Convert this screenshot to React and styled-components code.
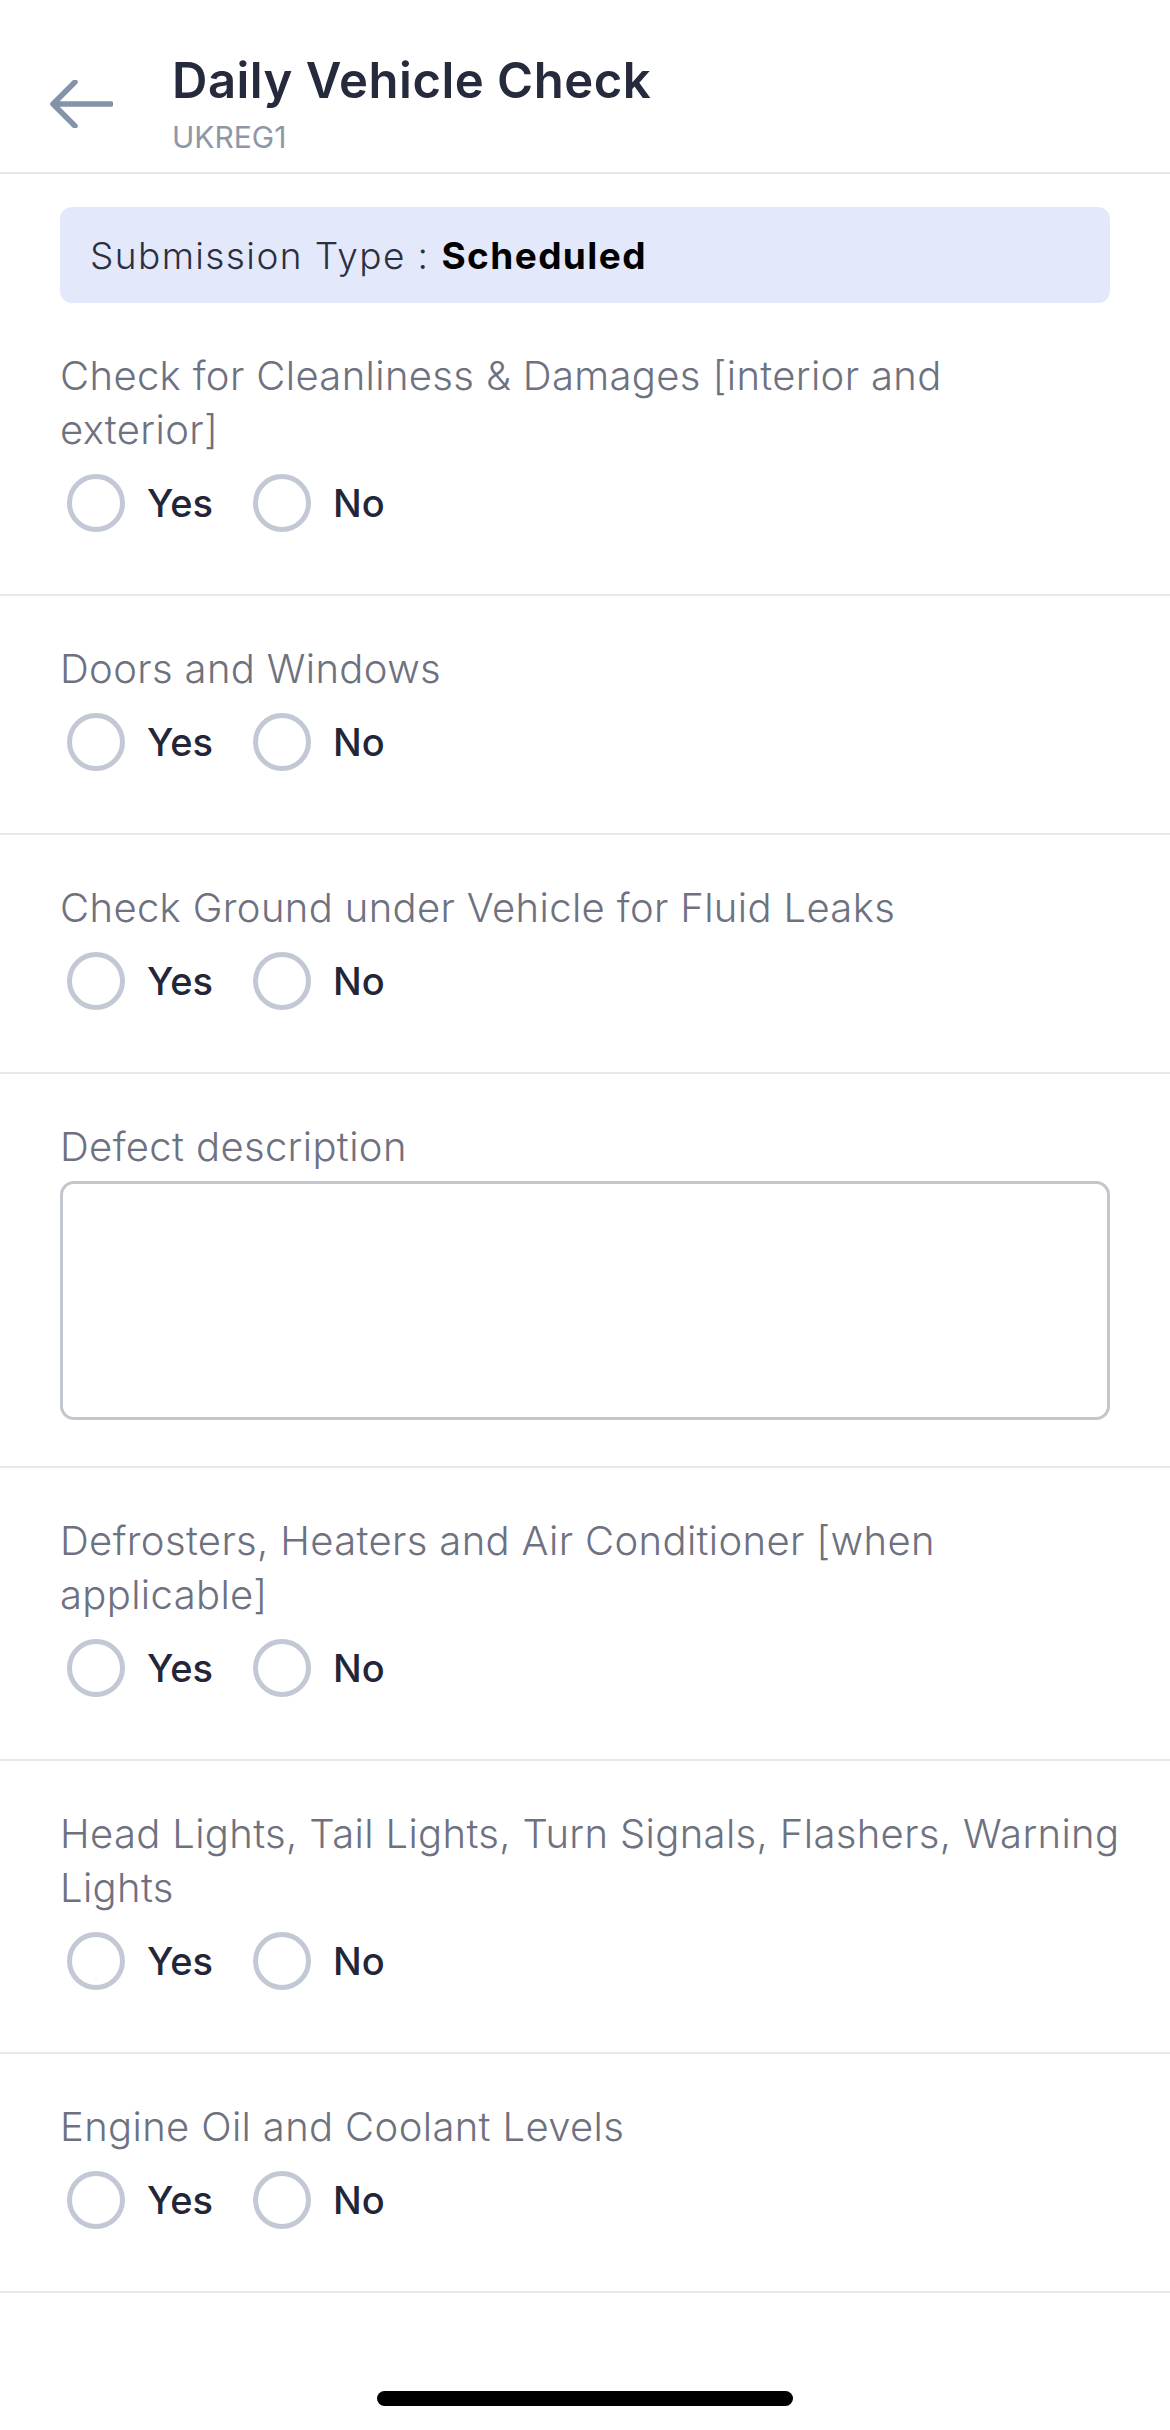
import styled, { createGlobalStyle } from "styled-components";

const GlobalStyle = createGlobalStyle`
  * {
    box-sizing: border-box;
  }
  body {
    margin: 0;
    background: #fff;
    font-family: "Inter", "Noto Sans", sans-serif;
  }
`;

// line breaks kept where the app wraps them on a 390pt screen
const questions = [
  { id: "clean", label: "Check for Cleanliness & Damages [interior and\nexterior]" },
  { id: "doors", label: "Doors and Windows" },
  { id: "leaks", label: "Check Ground under Vehicle for Fluid Leaks" },
  { id: "defect", label: "Defect description", type: "text" },
  { id: "heat", label: "Defrosters, Heaters and Air Conditioner [when\napplicable]" },
  { id: "lights", label: "Head Lights, Tail Lights, Turn Signals, Flashers, Warning\nLights" },
  { id: "oil", label: "Engine Oil and Coolant Levels" },
];

const BackArrow = () => (
  <svg width="64" height="48" viewBox="0 0 64 48" fill="none">
    <path
      d="M62 24H4M26 2L4 24l22 22"
      stroke="#8593a8"
      strokeWidth="5.5"
      strokeLinecap="round"
      strokeLinejoin="round"
    />
  </svg>
);

const Question = ({ q }) => (
  <SSection>
    <SLabel>{q.label}</SLabel>
    {q.type === "text" ? (
      <STextArea />
    ) : (
      <SRadioRow>
        <SOption>
          <SRadio type="radio" name={q.id} />
          Yes
        </SOption>
        <SOption>
          <SRadio type="radio" name={q.id} />
          No
        </SOption>
      </SRadioRow>
    )}
  </SSection>
);

export default function App() {
  return (
    <>
      <GlobalStyle />
      <SPage>
        <SHeader>
          <SBack aria-label="Back">
            <BackArrow />
          </SBack>
          <STitleBlock>
            <STitle>Daily Vehicle Check</STitle>
            <SSubtitle>UKREG1</SSubtitle>
          </STitleBlock>
        </SHeader>
        <SBannerWrap>
          <SBanner>
            <span>Submission Type :</span>
            <b>Scheduled</b>
          </SBanner>
        </SBannerWrap>
        {questions.map((q) => (
          <Question key={q.id} q={q} />
        ))}
        <SHomeBar />
      </SPage>
    </>
  );
}

const SPage = styled.div`
  min-height: 2430px;
  display: flex;
  flex-direction: column;
`;

const SHeader = styled.header`
  height: 174px;
  display: flex;
  align-items: center;
  padding: 0 0 0 49px;
  border-bottom: 2px solid #e6e6ea;
`;

const SBack = styled.button`
  border: 0;
  background: none;
  padding: 0;
  display: flex;
  margin-top: 36px;
`;

const STitleBlock = styled.div`
  margin-left: 59px;
  margin-top: 34px;
`;

const STitle = styled.h1`
  margin: 0;
  font-size: 49px;
  line-height: 60px;
  font-weight: 600;
  color: #262a3d;
  letter-spacing: 0.5px;
`;

const SSubtitle = styled.div`
  margin-top: 8px;
  font-size: 30px;
  line-height: 36px;
  font-weight: 400;
  color: #8e97a8;
`;

const SBannerWrap = styled.div`
  padding: 33px 60px 0;
`;

const SBanner = styled.div`
  height: 96px;
  display: flex;
  align-items: center;
  padding: 0 30px;
  gap: 12px;
  background: #e3e9fa;
  border-radius: 12px;
  font-size: 37px;
  font-weight: 300;
  letter-spacing: 1.4px;
  color: #2b2f40;

  b {
    font-weight: 700;
    color: #000;
    letter-spacing: 1.4px;
  }
`;

const SSection = styled.section`
  padding: 46px 60px 46px;
  border-bottom: 2px solid #e8e9ee;
`;

const SLabel = styled.div`
  margin-right: -30px;
  white-space: pre-line;
  font-size: 40px;
  line-height: 54px;
  font-weight: 300;
  letter-spacing: 0.35px;
  color: #6e7180;
`;

const SRadioRow = styled.div`
  height: 91px;
  display: flex;
  align-items: center;
  padding-left: 7px;
  gap: 40px;
`;

const SOption = styled.label`
  display: flex;
  align-items: center;
  gap: 22px;
  font-size: 38px;
  font-weight: 500;
  color: #222638;
`;

const SRadio = styled.input`
  appearance: none;
  margin: 0;
  width: 58px;
  height: 58px;
  border: 5px solid #c3c8d5;
  border-radius: 50%;
  background: #fff;
`;

const STextArea = styled.textarea`
  display: block;
  width: 100%;
  height: 239px;
  margin-top: 7px;
  border: 3px solid #c2c6cd;
  border-radius: 14px;
  resize: none;
  font: inherit;
`;

const SHomeBar = styled.div`
  width: 416px;
  height: 15px;
  margin: auto auto 24px;
  border-radius: 8px;
  background: #000;
`;
